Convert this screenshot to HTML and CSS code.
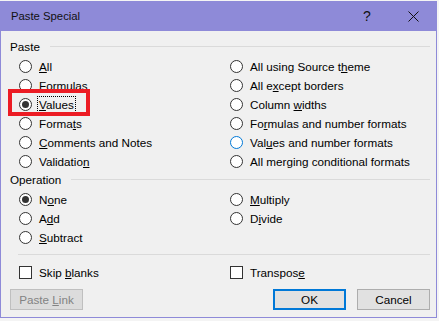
FILE: index.html
```html
<!DOCTYPE html>
<html>

<head>
    <title>Paste Special</title>
    <meta charset="utf-8">
    <link rel="stylesheet" href="styles.css">
</head>

<body>
    <div class="dialog">
        <div class="titlebar">
            <span class="title">Paste Special</span>
            <span class="tbtn help">?</span>
            <span class="tbtn close">
                <svg width="11" height="11" viewBox="0 0 11 11">
                    <path d="M0.5 0.5 L10.5 10.5 M10.5 0.5 L0.5 10.5" stroke="#111" stroke-width="1" fill="none" />
                </svg>
            </span>
        </div>

        <div class="content">
            <div class="legend"><span>Paste</span></div>
            <div class="options">
                <label class="opt"><span class="radio"></span><span><u>A</u>ll</span></label>
                <label class="opt"><span class="radio"></span><span>All using Source t<u>h</u>eme</span></label>

                <label class="opt"><span class="radio"></span><span><u>F</u>ormulas</span></label>
                <label class="opt"><span class="radio"></span><span>All e<u>x</u>cept borders</span></label>

                <label class="opt"><span class="radio checked"></span><span class="focus"><u>V</u>alues</span></label>
                <label class="opt"><span class="radio"></span><span>Column <u>w</u>idths</span></label>

                <label class="opt"><span class="radio"></span><span>Forma<u>t</u>s</span></label>
                <label class="opt"><span class="radio"></span><span>Fo<u>r</u>mulas and number formats</span></label>

                <label class="opt"><span class="radio"></span><span><u>C</u>omments and Notes</span></label>
                <label class="opt"><span class="radio hover"></span><span>Val<u>u</u>es and number formats</span></label>

                <label class="opt"><span class="radio"></span><span>Validatio<u>n</u></span></label>
                <label class="opt"><span class="radio"></span><span>All mer<u>g</u>ing conditional formats</span></label>
            </div>

            <div class="legend op-legend"><span>Operation</span></div>
            <div class="options">
                <label class="opt"><span class="radio checked"></span><span>N<u>o</u>ne</span></label>
                <label class="opt"><span class="radio"></span><span><u>M</u>ultiply</span></label>

                <label class="opt"><span class="radio"></span><span>A<u>d</u>d</span></label>
                <label class="opt"><span class="radio"></span><span>D<u>i</u>vide</span></label>

                <label class="opt"><span class="radio"></span><span><u>S</u>ubtract</span></label>
            </div>

            <div class="sep"></div>

            <div class="options checks">
                <label class="opt"><span class="check"></span><span>Skip <u>b</u>lanks</span></label>
                <label class="opt"><span class="check"></span><span>Transpos<u>e</u></span></label>
            </div>

            <div class="buttons">
                <button class="btn" disabled>Paste <u>L</u>ink</button>
                <button class="btn default push-right">OK</button>
                <button class="btn">Cancel</button>
            </div>
        </div>

        <!-- annotation box drawn over the dialog -->
        <div class="highlight"></div>
    </div>
</body>

</html>
```

FILE: styles.css
```css
body {
    margin: 0;
    background-color: #f4f4f4;
    font-family: "Segoe UI", "Liberation Sans", Arial, sans-serif;
    font-size: 11.7px;
    color: #000;
}

.dialog {
    position: relative;
    width: 437px;
    height: 317px;
    margin-top: 1px;
    box-sizing: border-box;
    border: 1px solid #8e8ad8;
    border-top: 0;
    background-color: #f0f0f0;
}

.titlebar {
    height: 30px;
    background-color: #8e8ad8;
    display: flex;
    align-items: center;
    padding-left: 10px;
    color: #111;
}

.title {
    font-size: 11.3px;
}

.tbtn {
    width: 46px;
    height: 30px;
    display: flex;
    align-items: center;
    justify-content: center;
}

.help {
    margin-left: auto;
    font-size: 14px;
}

.content {
    padding: 8px 6px 0 9px;
}

.legend {
    display: flex;
    align-items: center;
    gap: 10px;
    height: 14px;
}

.legend::after {
    content: "";
    flex: 1;
    border-top: 1px solid #dadada;
}

.op-legend {
    margin-top: 1px;
}

.options {
    display: grid;
    grid-template-columns: 211px 1fr;
    grid-auto-rows: 19px;
    padding-left: 9px;
    margin-top: 4px;
}

.opt {
    display: flex;
    align-items: center;
    gap: 7px;
    white-space: nowrap;
}

.radio {
    position: relative;
    width: 13px;
    height: 13px;
    box-sizing: border-box;
    border: 1px solid #333;
    border-radius: 50%;
    background-color: #fff;
}

.radio.checked::after {
    content: "";
    position: absolute;
    left: 2px;
    top: 2px;
    width: 7px;
    height: 7px;
    border-radius: 50%;
    background-color: #333;
}

.radio.hover {
    border-color: #0078d7;
}

.check {
    width: 13px;
    height: 13px;
    box-sizing: border-box;
    border: 1px solid #333;
    background-color: #fff;
}

.focus {
    outline: 1px dotted #000;
    outline-offset: 1px;
}

.sep {
    border-top: 1px solid #dadada;
    margin: 7px 0 0 8px;
}

.checks {
    margin-top: 8px;
}

.buttons {
    display: flex;
    gap: 11px;
    margin-top: 7px;
}

.btn {
    width: 73px;
    height: 21px;
    box-sizing: border-box;
    padding: 0;
    border: 1px solid #adadad;
    background-color: #e1e1e1;
    font-family: inherit;
    font-size: 11.7px;
    color: #000;
}

.btn:disabled {
    background-color: #dcdcdc;
    border-color: #bfbfbf;
    color: #838383;
}

.btn.default {
    border: 2px solid #0078d7;
}

.push-right {
    margin-left: auto;
}

.highlight {
    position: absolute;
    left: 7px;
    top: 88px;
    width: 82px;
    height: 27px;
    box-sizing: border-box;
    border: 4px solid #ec1c24;
}
```
